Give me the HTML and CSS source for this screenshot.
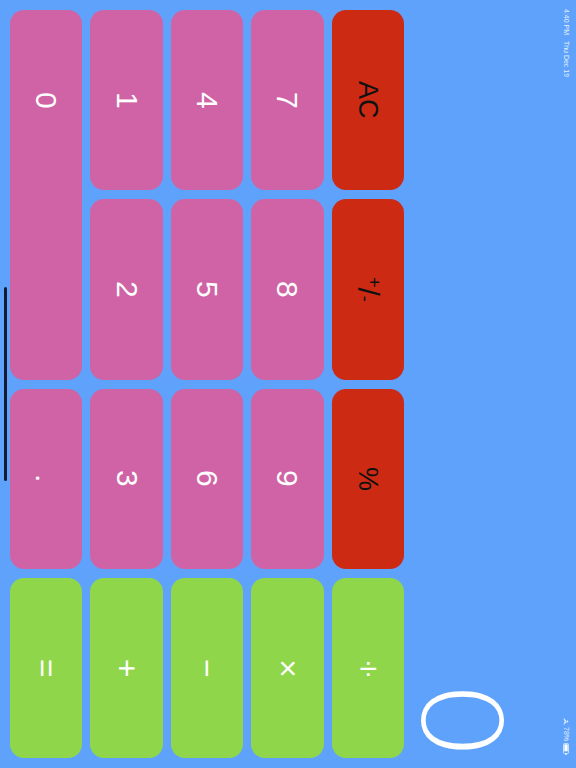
FILE: index.html
```html
<!DOCTYPE html>
<html>
<head>
<meta charset="utf-8">
<link rel="stylesheet" href="styles.css">
</head>
<body>
<div class="screen">
  <div class="pad">
    <div class="key digit zero"><span class="zero-label">0</span></div>
    <div class="key digit">1</div>
    <div class="key digit">4</div>
    <div class="key digit">7</div>
    <div class="key func">AC</div>
    <div class="key digit">2</div>
    <div class="key digit">5</div>
    <div class="key digit">8</div>
    <div class="key func pm"><span class="pm-label"><sup>+</sup>/<sub>-</sub></span></div>
    <div class="key digit">.</div>
    <div class="key digit">3</div>
    <div class="key digit">6</div>
    <div class="key digit">9</div>
    <div class="key func">%</div>
    <div class="key op">=</div>
    <div class="key op">+</div>
    <div class="key op">−</div>
    <div class="key op">×</div>
    <div class="key op">÷</div>
  </div>
  <div class="side">
    <div class="display"><span class="display-value">0</span></div>
    <div class="status">
      <div class="status-time">4:40 PM&nbsp;&nbsp;&nbsp;Thu Dec 19</div>
      <div class="status-icons">
        <svg class="wifi" width="6" height="7" viewBox="0 0 6 7">
          <path d="M1 0.5 A5 5 0 0 1 1 6.5" fill="none" stroke="#e6efff" stroke-width="1"/>
          <path d="M2.4 1.8 A3.2 3.2 0 0 1 2.4 5.2" fill="none" stroke="#e6efff" stroke-width="1"/>
          <circle cx="4.4" cy="3.5" r="0.9" fill="#e6efff"/>
        </svg>
        <span class="battery-pct">78%</span>
        <svg class="battery" width="6" height="12" viewBox="0 0 6 12">
          <rect x="0.5" y="0.5" width="5" height="10" rx="1" fill="none" stroke="#e6efff" stroke-width="0.8"/>
          <rect x="1.3" y="1.3" width="3.4" height="7" fill="#ffffff"/>
          <rect x="2" y="10.8" width="2" height="1" fill="#e6efff"/>
        </svg>
      </div>
    </div>
  </div>
  <div class="home-indicator"></div>
</div>
</body>
</html>
```

FILE: styles.css
```css
html, body {
  margin: 0;
  padding: 0;
}

body {
  background: #5fa2fb;
  width: 576px;
  height: 768px;
  overflow: hidden;
}

.screen {
  position: relative;
  display: flex;
  width: 576px;
  height: 768px;
}

.pad {
  display: grid;
  grid-template-columns: repeat(5, 72.4px);
  grid-template-rows: repeat(4, 180.25px);
  column-gap: 8px;
  row-gap: 9px;
  padding: 10px;
}

.key {
  display: flex;
  align-items: center;
  justify-content: center;
  border-radius: 14px;
  writing-mode: vertical-rl;
  font-family: "Liberation Sans", sans-serif;
  font-weight: 400;
  font-size: 30px;
  color: #ffffff;
}

.digit {
  background: #d063a5;
}

.func {
  background: #cd2a14;
  color: #111111;
  font-size: 27px;
}

.op {
  background: #90d64b;
  font-size: 32px;
}

.zero {
  grid-row: span 2;
  justify-content: flex-start;
}

.zero-label {
  display: flex;
  align-items: center;
  justify-content: center;
  height: 180.25px;
}

.pm-label {
  font-size: 30px;
}

.pm-label sup,
.pm-label sub {
  font-size: 18px;
}

.pm-label sup {
  vertical-align: 0.35em;
}

.pm-label sub {
  vertical-align: -0.15em;
}

.side {
  flex: 1;
  display: flex;
}

.display {
  width: 106px;
  display: flex;
  flex-direction: column;
  justify-content: flex-end;
  align-items: center;
  padding-bottom: 14px;
}

.display-value {
  writing-mode: vertical-rl;
  font-family: "Lato", "Liberation Sans", sans-serif;
  font-weight: 300;
  font-size: 115px;
  line-height: 1;
  color: #ffffff;
}

.status {
  margin-left: auto;
  width: 20px;
  display: flex;
  flex-direction: column;
  justify-content: space-between;
  align-items: center;
  padding: 9px 0 13px 0;
  color: #e6efff;
  font-family: "Liberation Sans", sans-serif;
}

.status-time {
  writing-mode: vertical-rl;
  font-size: 7px;
  line-height: 1;
}

.status-icons {
  display: flex;
  flex-direction: column;
  align-items: center;
  gap: 2px;
}

.battery-pct {
  writing-mode: vertical-rl;
  font-size: 7px;
  line-height: 1;
}

.home-indicator {
  position: absolute;
  left: 4px;
  top: 287px;
  width: 3px;
  height: 194px;
  border-radius: 2px;
  background: #111a2e;
}
```
